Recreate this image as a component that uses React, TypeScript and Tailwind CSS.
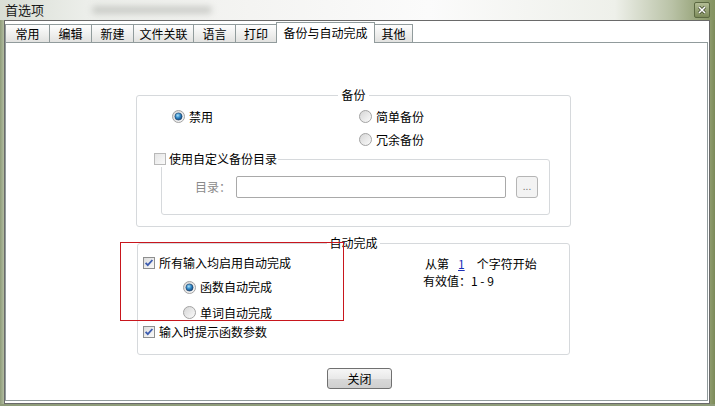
import React from "react";

const Check = ({ checked, dim }: { checked?: boolean; dim?: boolean }) => (
  <svg width="12" height="12" viewBox="0 0 12 12" className="shrink-0">
    <defs>
      <linearGradient id={dim ? "cbd" : "cb"} x1="0" y1="0" x2="1" y2="1">
        <stop offset="0" stopColor={dim ? "#e4e4e4" : "#dcdcdc"} />
        <stop offset="1" stopColor="#fbfbfb" />
      </linearGradient>
    </defs>
    <rect x="0.5" y="0.5" width="11" height="11" fill={`url(#${dim ? "cbd" : "cb"})`} stroke={dim ? "#b9b9b9" : "#8e8f8f"} />
    {checked && <path d="M2.6 5.8 L4.8 8.2 L9.4 3" fill="none" stroke="#3c5cb0" strokeWidth="1.8" />}
  </svg>
);

const Radio = ({ checked }: { checked?: boolean }) => (
  <svg width="13" height="13" viewBox="0 0 13 13" className="shrink-0">
    <defs>
      <linearGradient id="rb" x1="0" y1="0" x2="1" y2="1">
        <stop offset="0" stopColor="#d4d4d4" />
        <stop offset="1" stopColor="#fcfcfc" />
      </linearGradient>
      <radialGradient id="rd" cx="0.4" cy="0.35" r="0.7">
        <stop offset="0" stopColor="#a8e2fb" />
        <stop offset="0.5" stopColor="#2f86c6" />
        <stop offset="1" stopColor="#123f72" />
      </radialGradient>
    </defs>
    <circle cx="6.5" cy="6.5" r="6" fill="url(#rb)" stroke="#a3a3a3" />
    {checked && <circle cx="6.5" cy="6.5" r="3.6" fill="url(#rd)" stroke="#1d3f66" strokeWidth="0.6" />}
  </svg>
);

const tabs = [
  { label: "常用", w: "w-[44px]" },
  { label: "编辑", w: "w-[42px]" },
  { label: "新建", w: "w-[42px]" },
  { label: "文件关联", w: "w-[60px]" },
  { label: "语言", w: "w-[42px]" },
  { label: "打印", w: "w-[41px]" },
];

export default function App() {
  return (
    <div className="relative flex h-[406px] w-[715px] flex-col overflow-hidden bg-[#9aa884] font-['Noto_Sans_CJK_SC','Liberation_Sans',sans-serif] text-[12px] leading-[16px] text-black">
      {/* title bar */}
      <div className="flex h-[20px] shrink-0 items-center bg-[linear-gradient(90deg,#d9ded5_0%,#eceeea_12%,#f4f4f2_35%,#fbfbfb_60%,#eef0ea_86%,#b9c2a6_94%,#83925f_100%)]">
        <span className="pl-[5px] text-[13px] text-[#1a1a1a]">首选项</span>
        <div className="ml-[48px] h-[8px] w-[120px] rounded-full bg-[#a9aba6] opacity-50 blur-[3px]" />
        <div className="ml-auto mr-[5px] flex h-[16px] w-[16px] items-center justify-center rounded-[2px] border border-[#5c6942] bg-[linear-gradient(#b3bd95,#7d8b5a)]">
          <svg width="8" height="8" viewBox="0 0 8 8">
            <path d="M1 1 L7 7 M7 1 L1 7" stroke="#3b4428" strokeWidth="3" />
            <path d="M1 1 L7 7 M7 1 L1 7" stroke="#ffffff" strokeWidth="1.6" />
          </svg>
        </div>
      </div>

      <div className="flex min-h-0 flex-1">
        <div className="w-[4px] shrink-0 bg-[linear-gradient(90deg,#8f9c7a,#b2bda0)]" />
        {/* client area */}
        <div className="flex flex-1 flex-col border border-[#6a6a6a] bg-white">
          {/* tabs */}
          <div className="mt-[1px] flex h-[20px] items-end">
            {tabs.map((t) => (
              <div
                key={t.label}
                className={`${t.w} flex h-[18px] items-center justify-center border border-b-0 border-r-0 border-[#919b9c] bg-[linear-gradient(#fefefe,#e2e2e0)]`}
              >
                {t.label}
              </div>
            ))}
            <div className="relative z-10 -mb-[1px] flex h-[21px] w-[99px] items-start justify-center border border-b-0 border-[#919b9c] bg-white pt-[2px]">
              备份与自动完成
            </div>
            <div className="flex h-[18px] w-[38px] items-center justify-center border border-b-0 border-l-0 border-[#919b9c] bg-[linear-gradient(#fefefe,#e2e2e0)]">
              其他
            </div>
          </div>

          {/* panel */}
          <div className="mb-[2px] mr-[1px] flex flex-1 flex-col border border-[#919b9c] bg-white">
            {/* backup */}
            <fieldset className="ml-[130px] mt-[44px] h-[140px] w-[435px] rounded-[3px] border border-[#d6d9dc]">
              <legend className="mx-auto px-[3px] leading-[16px]">备份</legend>
              <div className="grid grid-cols-[187px_1fr] pl-[35px] pt-[2px]">
                <div className="flex h-[23px] items-center gap-[4px]">
                  <Radio checked />
                  <span>禁用</span>
                </div>
                <div className="flex h-[23px] items-center gap-[4px]">
                  <Radio />
                  <span>简单备份</span>
                </div>
                <div className="h-[23px]" />
                <div className="flex h-[23px] items-center gap-[4px]">
                  <Radio />
                  <span>冗余备份</span>
                </div>
              </div>
              <fieldset className="ml-[24px] h-[64px] w-[389px] rounded-[3px] border border-[#d6d9dc]">
                <legend className="relative -ml-[8px] flex items-center gap-[3px] bg-white pr-[1px] leading-[16px]">
                  <Check dim />
                  <span>使用自定义备份目录</span>
                </legend>
                <div className="mt-[9px] flex items-center pl-[33px]">
                  <span className="w-[41px] text-[#8a8a8a]">目录：</span>
                  <div className="h-[22px] w-[270px] rounded-[2px] border border-[#a9a9a9] bg-white" />
                  <div className="ml-[10px] flex h-[22px] w-[22px] items-center justify-center rounded-[3px] border border-[#b5b5b5] bg-[#f3f3f3] pb-[2px] text-[10px] text-[#7a7a7a]">
                    ...
                  </div>
                </div>
              </fieldset>
            </fieldset>

            {/* auto complete */}
            <fieldset className="ml-[131px] mt-[8px] h-[120px] w-[433px] rounded-[3px] border border-[#d6d9dc]">
              <legend className="mx-auto px-[2px] leading-[16px]">自动完成</legend>
              <div className="flex pl-[5px] pt-[1px]">
                <div className="w-[280px]">
                  <div className="flex h-[22px] items-center gap-[4px]">
                    <Check checked />
                    <span>所有输入均启用自动完成</span>
                  </div>
                  <div className="flex h-[26px] items-center gap-[4px] pl-[40px]">
                    <Radio checked />
                    <span>函数自动完成</span>
                  </div>
                  <div className="flex h-[25px] items-center gap-[4px] pl-[40px]">
                    <Radio />
                    <span>单词自动完成</span>
                  </div>
                  <div className="flex h-[14px] items-center gap-[4px]">
                    <Check checked />
                    <span>输入时提示函数参数</span>
                  </div>
                </div>
                <div className="pt-[3px] leading-[17px]">
                  <div className="flex">
                    <span className="ml-[2px]">从第</span>
                    <span className="ml-[9px] text-[#1a2fb8] underline">1</span>
                    <span className="ml-[12px]">个字符开始</span>
                  </div>
                  <div>有效值：1 - 9</div>
                </div>
              </div>
            </fieldset>

            <div className="ml-[321px] mt-[13px] flex h-[21px] w-[65px] items-center justify-center rounded-[3px] border border-[#707070] bg-[linear-gradient(#f6f6f6_0%,#e9e9e9_50%,#d9d9d9_51%,#cfcfcf_100%)]">
              关闭
            </div>
          </div>
        </div>
        <div className="w-[5px] shrink-0 bg-[linear-gradient(90deg,#8f9c6d,#7b8a58)]" />
      </div>
      <div className="h-[2px] shrink-0 bg-[#8f9c7a]" />

      {/* annotation overlay */}
      <div className="pointer-events-none absolute left-[120px] top-[242px] h-[79px] w-[224px] border border-[#c8161d]" />
    </div>
  );
}
